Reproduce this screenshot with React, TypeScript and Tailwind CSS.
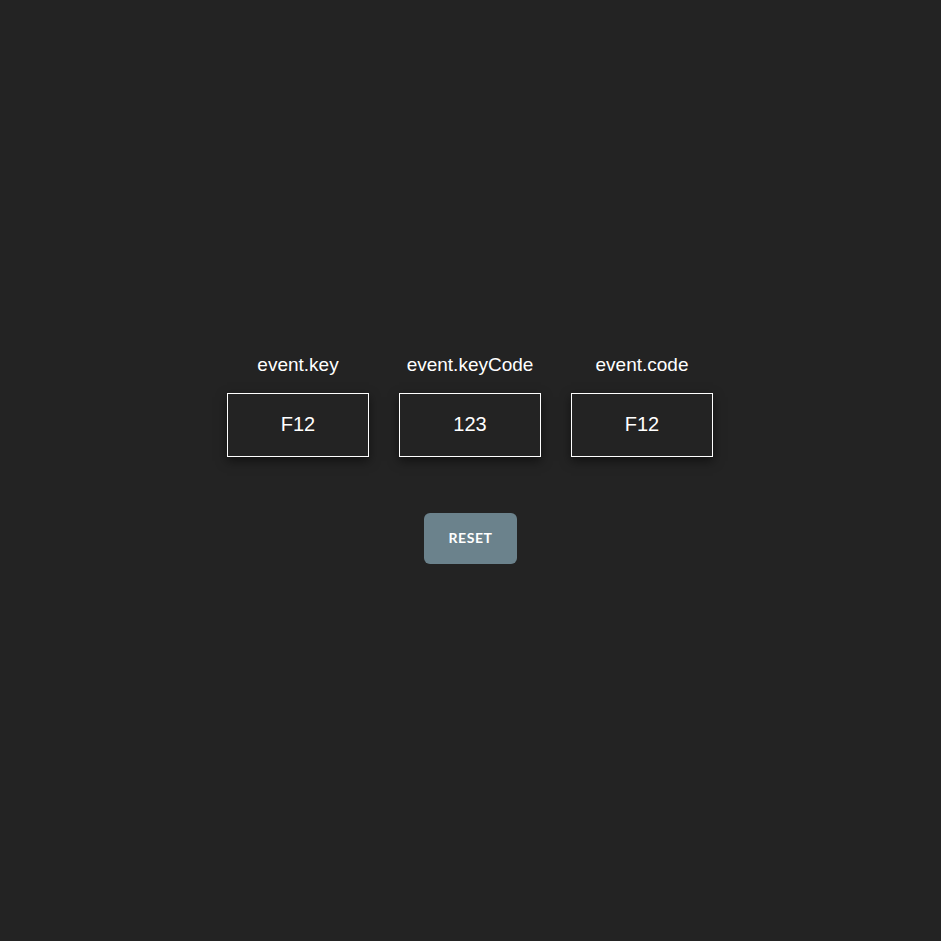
import React from 'react';

const fields = [
  { label: 'event.key', value: 'F12' },
  { label: 'event.keyCode', value: '123' },
  { label: 'event.code', value: 'F12' },
];

export default function App() {
  return (
    <div className="w-full h-[941px] bg-[#232323] flex flex-col items-center pt-[353px] font-['Liberation_Sans',Arial,sans-serif] text-white">
      {/* key info cards */}
      <div className="flex gap-[30px] -ml-[1px]">
        {fields.map((f) => (
          <div key={f.label} className="flex flex-col items-center">
            <div className="text-[19px] leading-[24px] mb-[16px] text-white">{f.label}</div>
            <div className="w-[142px] h-[64px] border border-white flex items-center justify-center text-[20px] pb-[3px] shadow-[0_4px_10px_rgba(0,0,0,0.5)]">
              {f.value}
            </div>
          </div>
        ))}
      </div>

      <button className="mt-[56px] w-[93px] h-[51px] rounded-[6px] bg-[#6b828c] text-white text-[14px] font-bold font-['Lato',sans-serif] tracking-[0.6px] pb-[2px]">
        RESET
      </button>
    </div>
  );
}
